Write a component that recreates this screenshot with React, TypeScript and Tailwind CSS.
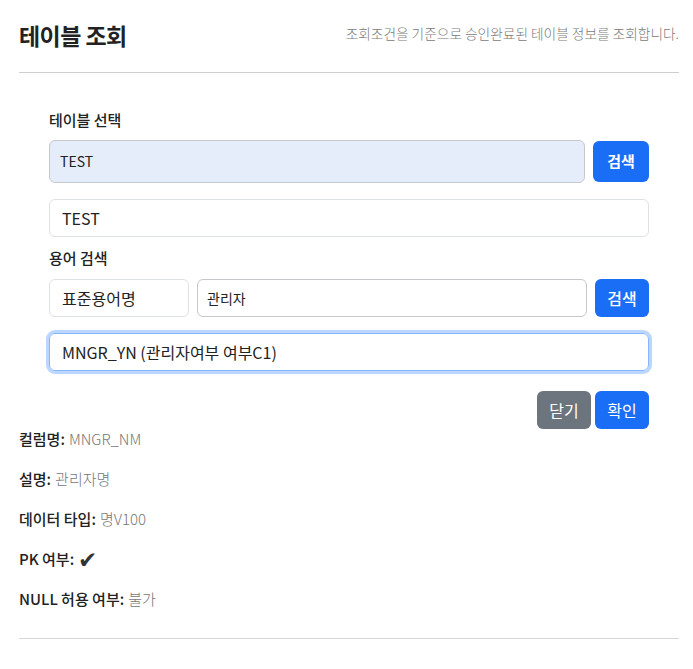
import { useState } from 'react'

const font = { fontFamily: '"Noto Sans CJK KR", "Noto Sans", sans-serif' }

const InfoRow = (props: { label: string; children: React.ReactNode }): JSX.Element => (
  <div className="h-10 flex items-center text-[15px] leading-none">
    <span className="font-medium text-[#222]">{props.label}:</span>
    <span className="ml-1 font-light text-[#777]">{props.children}</span>
  </div>
)

const App = (): JSX.Element => {
  const [term, setTerm] = useState('관리자')
  const [picked, setPicked] = useState('MNGR_YN (관리자여부 여부C1)')

  return (
    <div className="min-h-screen bg-white text-[#212529]" style={font}>
      <div className="pl-[19px] pr-[14px]">
        <div className="h-[73px] flex items-center justify-between border-b border-[#cfcfcf] pb-px">
          <h1 className="text-[23px] font-bold text-[#222] tracking-tight">테이블 조회</h1>
          <p className="text-[13.7px] font-light text-[#7a7a7a] -mt-1">조회조건을 기준으로 승인완료된 테이블 정보를 조회합니다.</p>
        </div>

        <div className="px-[30px] pt-[36px] pb-[2px]">
          <div className="text-[15px] font-medium leading-[22px] text-[#222]">테이블 선택</div>
          <div className="mt-[9px] flex gap-2 items-center">
            <div className="flex-1 h-[43px] rounded-md border border-[#c6c8cc] bg-[#e6edfa] flex items-center px-[10px] text-[14px] text-[#222]">TEST</div>
            <button className="w-14 h-[41px] rounded-md bg-[#1a6ef5] text-white text-[15px] font-bold">검색</button>
          </div>
          <div className="mt-4 h-[38px] rounded-md border border-[#dee2e6] flex items-center px-3 text-[16px] text-[#222]">TEST</div>

          <div className="mt-[10px] text-[15px] font-medium leading-[22px] text-[#222]">용어 검색</div>
          <div className="mt-[10px] flex items-center">
            <div className="w-[140px] h-[38px] rounded-md border border-[#dee2e6] flex items-center px-3 text-[16px] text-[#222]">표준용어명</div>
            <input
              value={term}
              onChange={(e) => { setTerm(e.target.value) }}
              className="ml-2 flex-1 h-[38px] rounded-md border border-[#c6c8cc] px-[9px] text-[14px] text-[#222] outline-none"
            />
            <button className="ml-2 w-[54px] h-[38px] rounded-md bg-[#1a6ef5] text-white text-[16px] font-medium">검색</button>
          </div>
          <div className="mt-4">
            <input
              value={picked}
              onChange={(e) => { setPicked(e.target.value) }}
              className="w-full h-[38px] rounded-md border border-[#86b7fe] shadow-[0_0_0_3px_rgba(13,110,253,0.28)] px-3 text-[16px] text-[#222] outline-none"
            />
          </div>
          <div className="mt-5 flex justify-end gap-1">
            <button className="w-[54px] h-[38px] rounded-md bg-[#6c757d] text-white text-[16px]">닫기</button>
            <button className="w-[54px] h-[38px] rounded-md bg-[#1a6ef5] text-white text-[16px]">확인</button>
          </div>
        </div>

        <div className="-mt-[13px] border-b border-[#d6d6d6] pb-[20px]">
          <InfoRow label="컬럼명">MNGR_NM</InfoRow>
          <InfoRow label="설명">관리자명</InfoRow>
          <InfoRow label="데이터 타입">명V100</InfoRow>
          <InfoRow label="PK 여부"><span className="text-[23px] font-normal text-[#333]">✔</span></InfoRow>
          <InfoRow label="NULL 허용 여부">불가</InfoRow>
        </div>
      </div>
    </div>
  )
}

export default App
